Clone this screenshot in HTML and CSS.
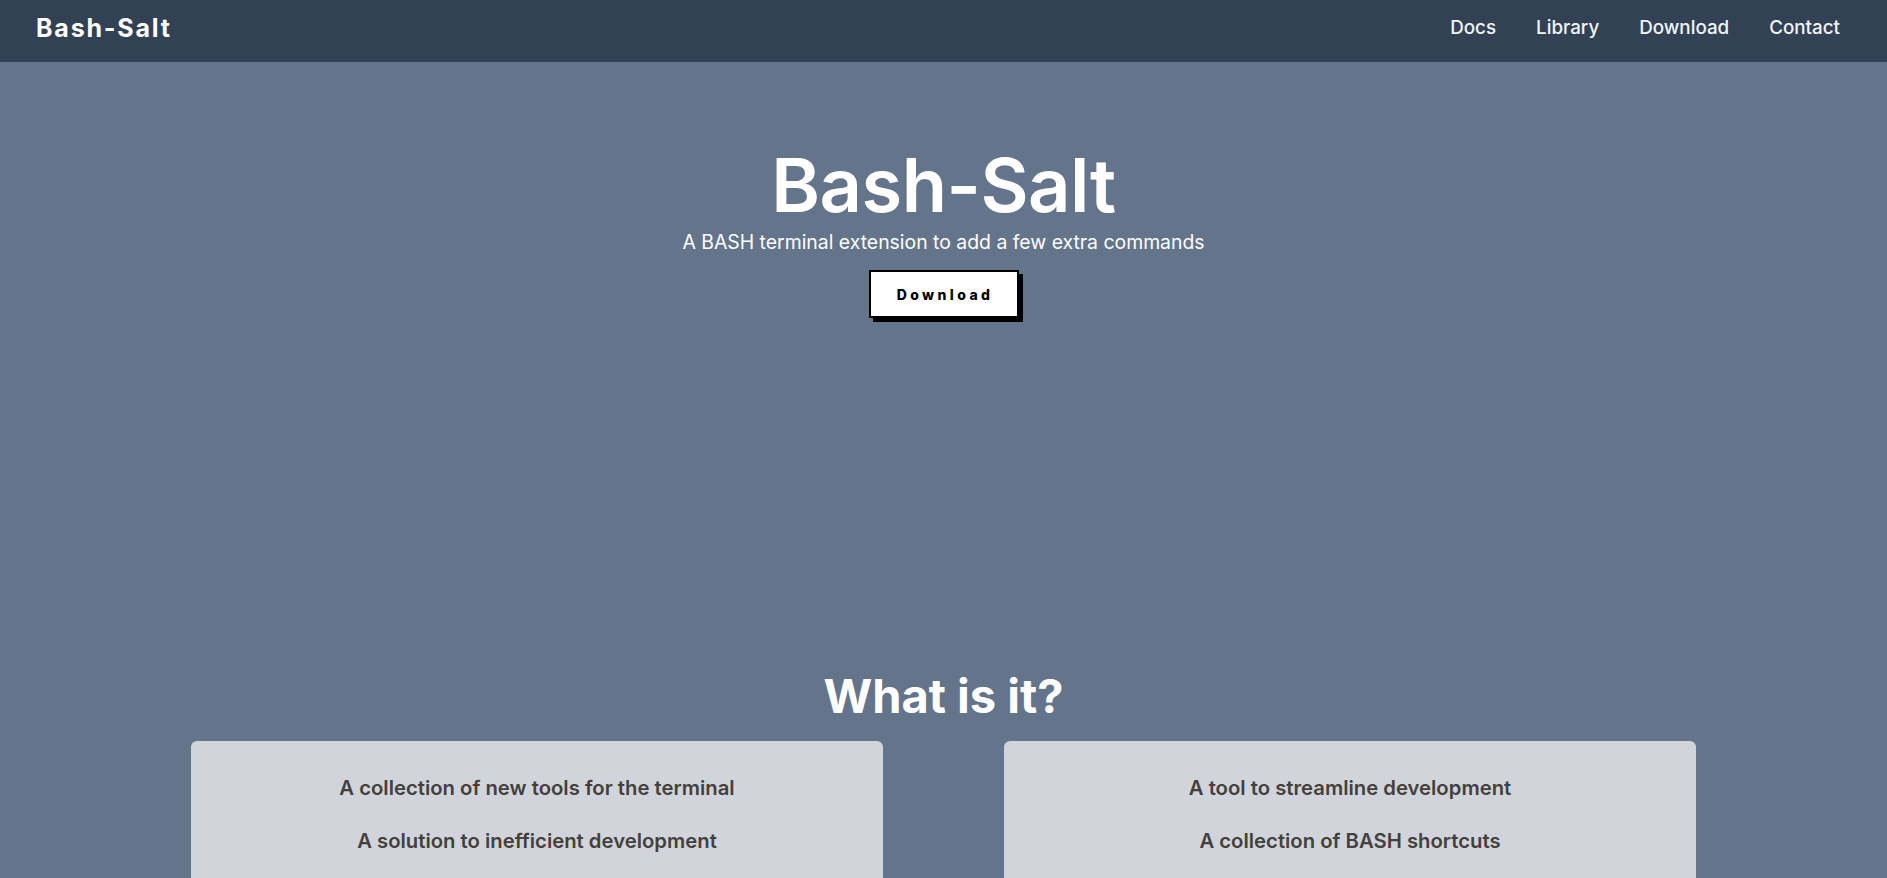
FILE: index.html
```html
<!DOCTYPE html>
<html lang="en">
<head>
<meta charset="utf-8">
<title>Bash-Salt</title>
<link rel="stylesheet" href="styles.css">
</head>
<body>
<header class="navbar">
  <a class="logo" href="#">Bash-Salt</a>
  <nav class="nav-links">
    <a href="#">Docs</a>
    <a href="#">Library</a>
    <a href="#">Download</a>
    <a href="#">Contact</a>
  </nav>
</header>
<main>
  <section class="hero">
    <h1 class="hero-title">Bash-Salt</h1>
    <p class="hero-sub">A BASH terminal extension to add a few extra commands</p>
    <a class="btn" href="#">Download</a>
  </section>
  <section class="about">
    <h2 class="about-title">What is it?</h2>
    <div class="cards">
      <div class="card">
        <p>A collection of new tools for the terminal</p>
        <p>A solution to inefficient development</p>
      </div>
      <div class="card">
        <p>A tool to streamline development</p>
        <p>A collection of BASH shortcuts</p>
      </div>
    </div>
  </section>
</main>
</body>
</html>
```
FILE: styles.css
```css
* { box-sizing: border-box; }
html, body { margin: 0; padding: 0; }
body {
  background: #64748b;
  font-family: Inter, "Noto Sans", Roboto, sans-serif;
  color: #ffffff;
}
a { text-decoration: none; color: inherit; }

.navbar {
  height: 62px;
  background: #334155;
  display: flex;
  align-items: center;
  justify-content: space-between;
  padding: 0 47px 7px 36px;
}
.logo {
  font-size: 25px;
  font-weight: 700;
  letter-spacing: 1.8px;
  color: #ffffff;
}
.nav-links {
  display: flex;
  gap: 40px;
}
.nav-links a {
  font-size: 18.8px;
  font-weight: 500;
  color: #f1f5f9;
}

.hero {
  display: flex;
  flex-direction: column;
  align-items: center;
  padding: 86px 0 0;
  height: 606px;
}
.hero-title {
  margin: 0;
  font-size: 74px;
  line-height: 74px;
  font-weight: 600;
  letter-spacing: -0.5px;
}
.hero-sub {
  margin: 8px 0 0;
  font-size: 19.4px;
  line-height: 24px;
  font-weight: 400;
}
.btn {
  margin-top: 16px;
  width: 150px;
  height: 48px;
  display: flex;
  align-items: center;
  justify-content: center;
  background: #ffffff;
  color: #000000;
  border: 2px solid #000000;
  box-shadow: 4px 4px 0 #000000;
  font-size: 14px;
  font-weight: 800;
  letter-spacing: 3.4px;
  padding-left: 3px;
}

.about {
  display: flex;
  flex-direction: column;
  align-items: center;
}
.about-title {
  margin: 0 0 17px;
  font-size: 47px;
  line-height: 56px;
  font-weight: 700;
}
.cards {
  width: 1505px;
  display: grid;
  grid-template-columns: 1fr 1fr;
  gap: 121px;
}
.card {
  background: #d1d5db;
  border-radius: 6px;
  padding: 33px 20px 60px;
  display: flex;
  flex-direction: column;
  align-items: center;
  gap: 25px;
}
.card p {
  margin: 0;
  font-size: 20.3px;
  line-height: 28px;
  font-weight: 600;
  color: #44403c;
}
```
